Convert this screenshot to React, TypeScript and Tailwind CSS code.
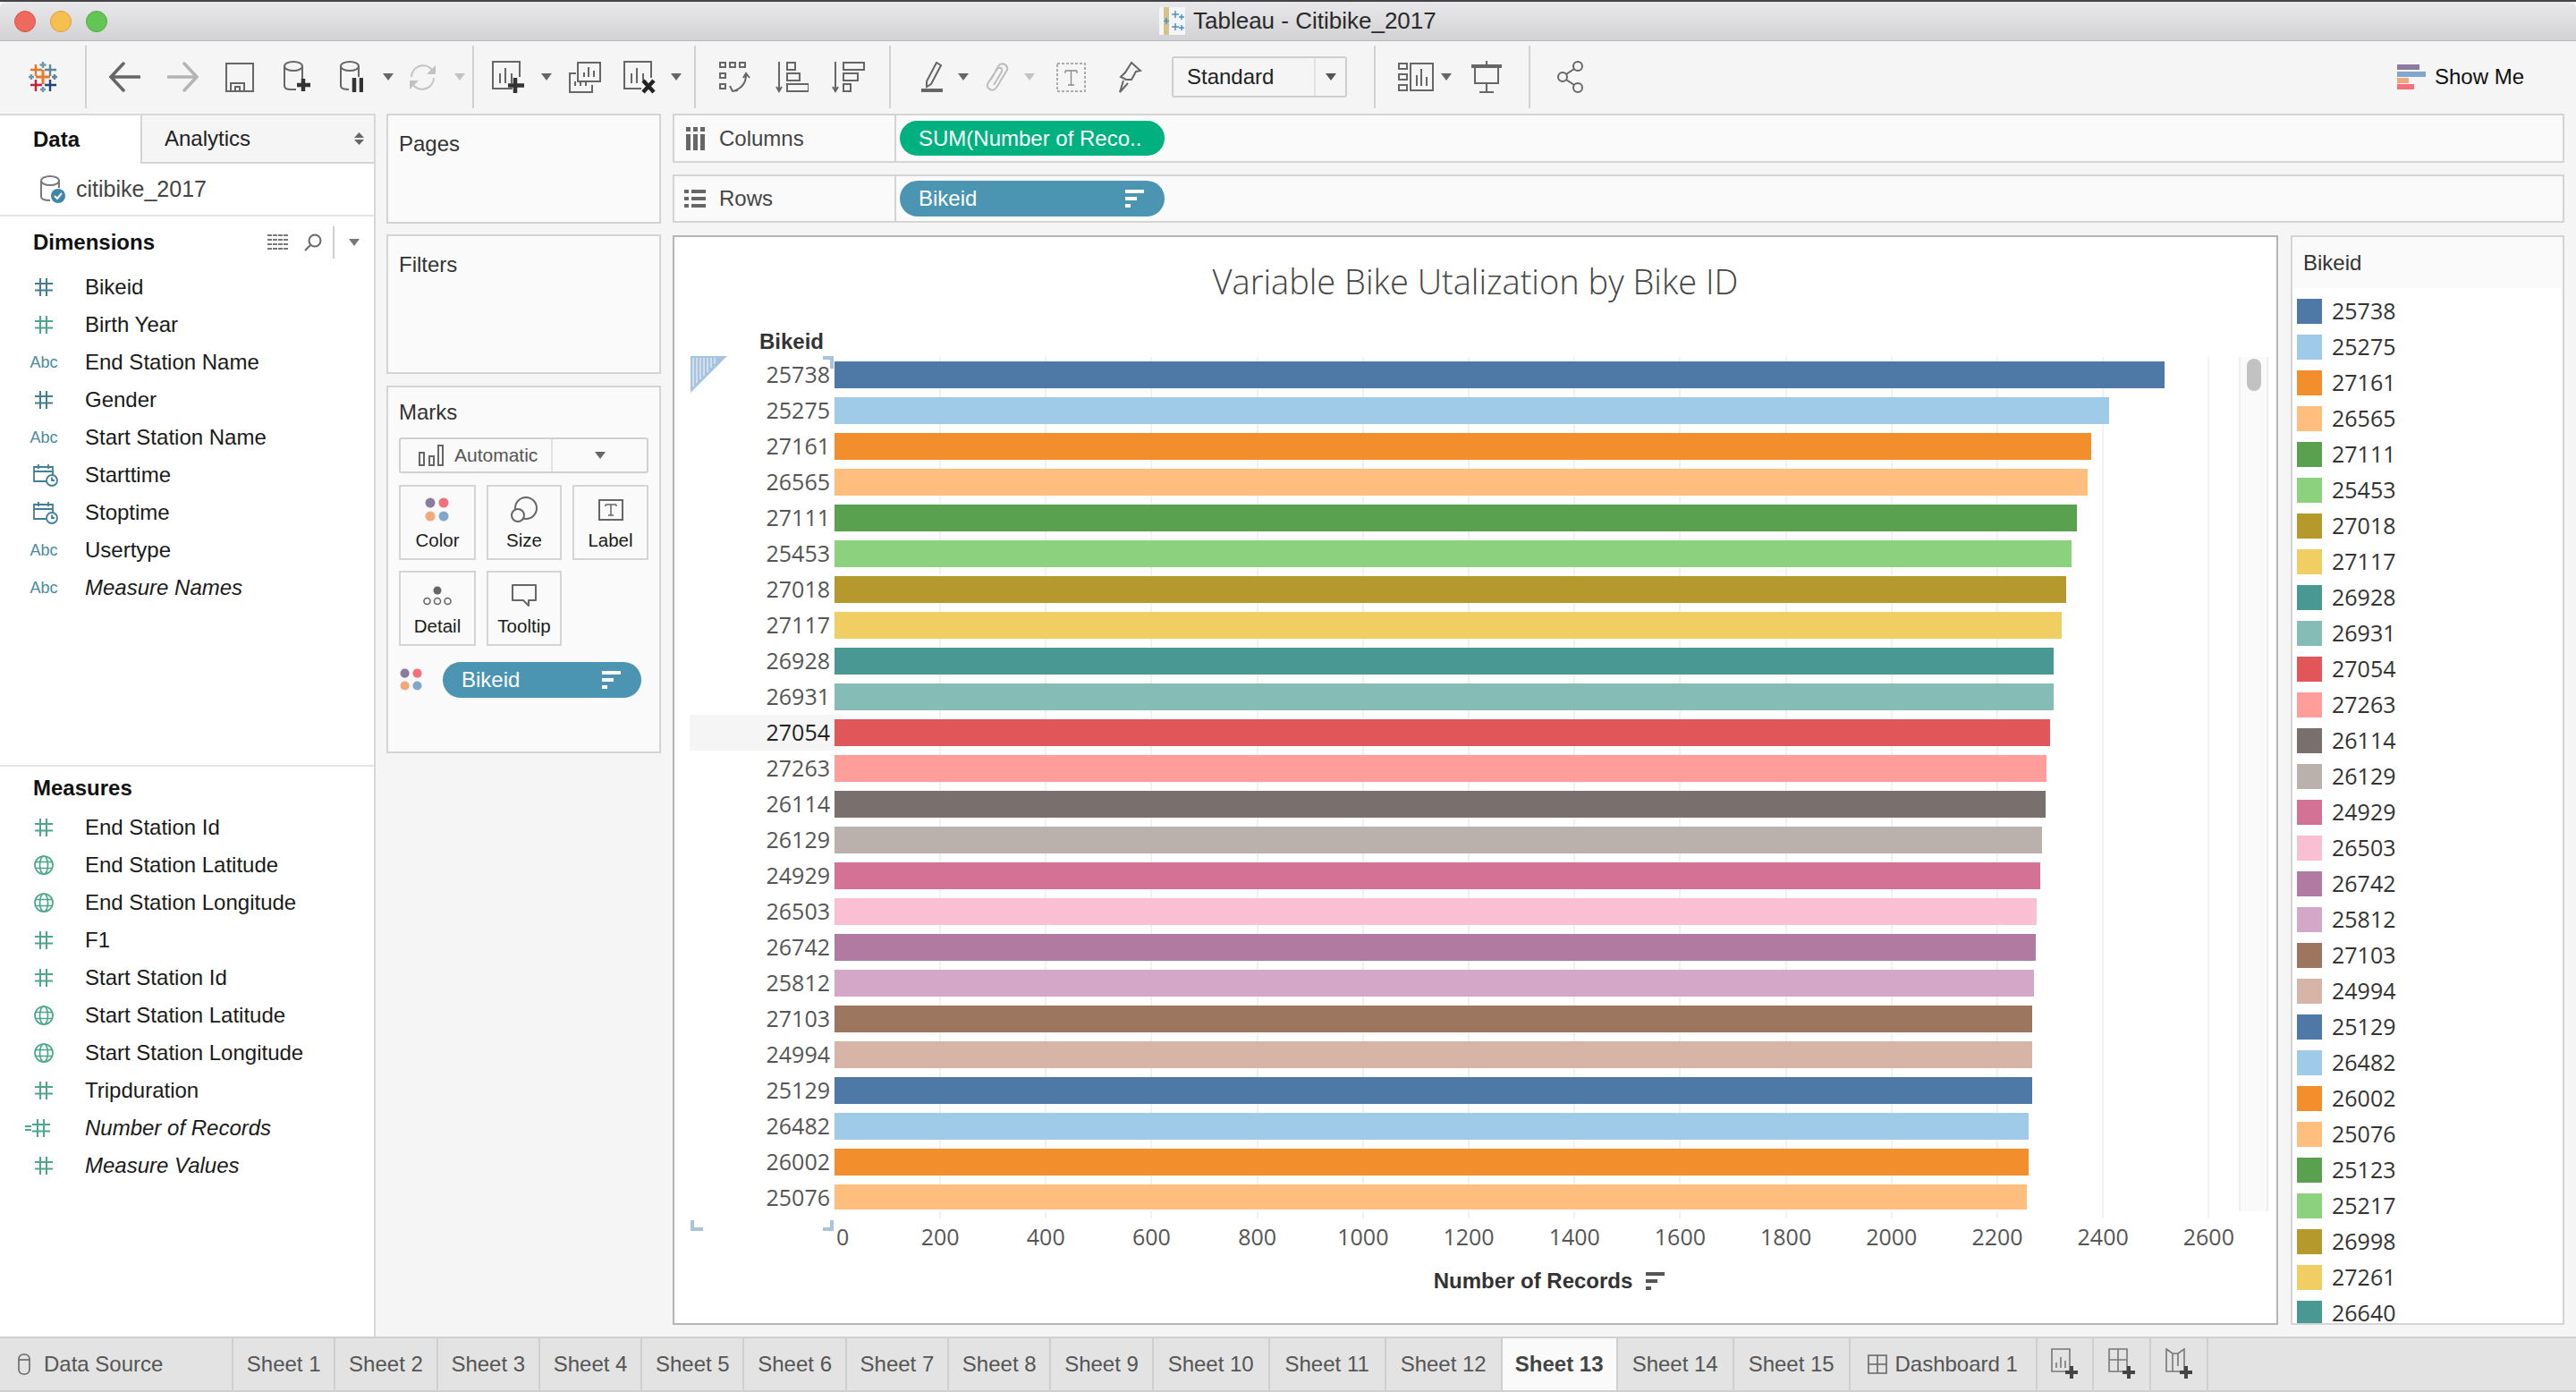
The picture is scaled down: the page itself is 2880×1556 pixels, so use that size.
import React from 'react';

const UI = "font-['Liberation_Sans',Arial,sans-serif]";
const NUM = "font-['Open_Sans',sans-serif]";

const rows: [string, string, number][] = [
  ['25738', '#4e79a7', 2420], ['25275', '#a0cbe8', 2358], ['27161', '#f28e2b', 2338], ['26565', '#ffbe7d', 2334],
  ['27111', '#59a14f', 2322], ['25453', '#8cd17d', 2316], ['27018', '#b6992d', 2310], ['27117', '#f1ce63', 2305],
  ['26928', '#499894', 2296], ['26931', '#86bcb6', 2296], ['27054', '#e15759', 2292], ['27263', '#ff9d9a', 2288],
  ['26114', '#79706e', 2287], ['26129', '#bab0ac', 2283], ['24929', '#d37295', 2281], ['26503', '#fabfd2', 2277],
  ['26742', '#b07aa1', 2276], ['25812', '#d4a6c8', 2274], ['27103', '#9d7660', 2272], ['24994', '#d7b5a6', 2272],
  ['25129', '#4e79a7', 2272], ['26482', '#a0cbe8', 2268], ['26002', '#f28e2b', 2268], ['25076', '#ffbe7d', 2266],
];

const legendExtra: [string, string][] = [
  ['25123', '#59a14f'], ['25217', '#8cd17d'], ['26998', '#b6992d'], ['27261', '#f1ce63'], ['26640', '#499894'],
];

const ticks = [200, 400, 600, 800, 1000, 1200, 1400, 1600, 1800, 2000, 2200, 2400, 2600];

const dimensions: [string, string, boolean?][] = [
  ['hash', 'Bikeid'], ['hashg', 'Birth Year'], ['abc', 'End Station Name'], ['hash', 'Gender'],
  ['abc', 'Start Station Name'], ['cal', 'Starttime'], ['cal', 'Stoptime'], ['abc', 'Usertype'],
  ['abc', 'Measure Names', true],
];

const measures: [string, string, boolean?][] = [
  ['hashg', 'End Station Id'], ['globe', 'End Station Latitude'], ['globe', 'End Station Longitude'], ['hashg', 'F1'],
  ['hashg', 'Start Station Id'], ['globe', 'Start Station Latitude'], ['globe', 'Start Station Longitude'],
  ['hashg', 'Tripduration'], ['calc', 'Number of Records', true], ['hashg', 'Measure Values', true],
];

const Caret = ({ color = '#666' }: { color?: string }) => (
  <svg width="12" height="8" viewBox="0 0 12 8"><path d="M0 0h12L6 8z" fill={color} /></svg>
);

const SortBars = ({ color = '#fff' }: { color?: string }) => (
  <svg width="21" height="20" viewBox="0 0 21 20" fill={color}>
    <rect x="0" y="0" width="21" height="4" />
    <rect x="0" y="8" width="13" height="4" />
    <rect x="0" y="16" width="6" height="4" />
  </svg>
);

const Hash = ({ color }: { color: string }) => (
  <svg width="20" height="20" viewBox="0 0 20 20" stroke={color} strokeWidth="2" fill="none">
    <path d="M6 0v20M13 0v20M0 6h20M0 13.500h20" />
  </svg>
);

const Globe = () => (
  <svg width="22" height="22" viewBox="0 0 22 22" stroke="#4aa888" strokeWidth="1.700" fill="none">
    <circle cx="11" cy="11" r="10" />
    <ellipse cx="11" cy="11" rx="4.500" ry="10" />
    <path d="M1.500 7.500h19M1.500 14.500h19" />
  </svg>
);

const Cal = () => (
  <svg width="28" height="26" viewBox="0 0 28 26" fill="none" stroke="#3f7f9a" strokeWidth="1.800">
    <path d="M15 20H1V4h21v9M1 9h21M6 1v5M17 1v5" />
    <circle cx="21" cy="19" r="6" fill="#fff" />
    <path d="M21 15.500V19h3" />
  </svg>
);

const FieldIcon = ({ kind }: { kind: string }) => {
  if (kind === 'hash') return <Hash color="#3f7f9a" />;
  if (kind === 'hashg') return <Hash color="#4aa888" />;
  if (kind === 'globe') return <Globe />;
  if (kind === 'cal') return <div className="ml-[3px]"><Cal /></div>;
  if (kind === 'abc') return <span className="text-[18px] text-[#4a8aa6]">Abc</span>;
  return (
    <div className="flex items-center gap-[1px] -ml-[15px]">
      <svg width="7" height="6" viewBox="0 0 7 6" fill="#4aa888"><rect width="7" height="2" /><rect y="4" width="7" height="2" /></svg>
      <Hash color="#4aa888" />
    </div>
  );
};

const Field = ({ icon, name, italic, h }: { icon: string; name: string; italic?: boolean; h: string }) => (
  <div className={`flex items-center ${h}`}>
    <div className="w-[95px] flex justify-center pl-[21px] pr-[18px] shrink-0">
      <FieldIcon kind={icon} />
    </div>
    <span className={`text-[24px] text-[#1a1a1a] ${italic ? 'italic' : ''}`}>{name}</span>
  </div>
);

const Logo = () => (
  <svg width="32" height="34" viewBox="0 0 32 34" strokeWidth="2.400" fill="none">
    <path d="M16 9v16M8 17h16" stroke="#e8762b" strokeWidth="3" />
    <path d="M8 3v13M2 9h13" stroke="#e8762b" />
    <path d="M24 3v13M18 9h13" stroke="#5b879b" />
    <path d="M8 20v13M2 26h13" stroke="#c72037" />
    <path d="M24 20v13M18 26h13" stroke="#1f447e" />
    <path d="M16 0v7M12.500 3.500h7" stroke="#7099a6" />
    <path d="M16 28v6M13 31h6" stroke="#7099a6" />
    <path d="M3 14v6M0 17h6" stroke="#7099a6" />
    <path d="M29 14v6M26 17h6" stroke="#59879b" />
  </svg>
);

const TbSep = ({ ml }: { ml: string }) => <div className={`w-[2px] h-[70px] bg-[#d2d2d2] shrink-0 ${ml}`} />;

const ColorDots = ({ size = 28 }: { size?: number }) => (
  <svg width={size} height={size} viewBox="0 0 28 28">
    <circle cx="6" cy="6" r="5.500" fill="#8b7ba0" />
    <circle cx="21" cy="6" r="5.500" fill="#f4707c" />
    <circle cx="6" cy="21" r="5.500" fill="#f2a87c" />
    <circle cx="21" cy="21" r="5.500" fill="#82a7cc" />
  </svg>
);

const MarkBtn = ({ label, icon, w }: { label: string; icon: React.ReactNode; w: string }) => (
  <div className={`${w} h-[84px] border-2 border-[#d4d4d4] flex flex-col items-center`}>
    <div className="h-[48px] flex items-center justify-center pt-[4px]">{icon}</div>
    <span className="text-[20.500px] text-[#1a1a1a] leading-[24px]">{label}</span>
  </div>
);

const Tab = ({ w, label, active }: { w: string; label: string; active?: boolean }) => (
  <div className={`${w} shrink-0 h-full flex items-center justify-center border-r-2 border-[#cfcfcf] text-[24px] ${active ? 'bg-[#fafafa] font-bold text-[#444]' : 'text-[#555]'}`}>
    {label}
  </div>
);

const AddIcon = ({ children }: { children: React.ReactNode }) => (
  <svg width="30" height="36" viewBox="0 0 30 36" fill="none" stroke="#777" strokeWidth="1.600">
    {children}
    <path d="M23 20v14M16 27h14" stroke="#444" strokeWidth="4" />
  </svg>
);

export default function App() {
  return (
    <div className={`${UI} w-[2880px] h-[1556px] overflow-hidden bg-[#f5f5f5] flex flex-col`}>
      <div className="h-[2px] bg-[#444] shrink-0" />

      {/* title bar */}
      <div className="h-[44px] shrink-0 relative flex items-center rounded-t-[8px] bg-gradient-to-b from-[#e9e8ea] to-[#d2d1d3] border-b border-[#b8b8b8]">
        <div className="flex items-center gap-[16px] ml-[16px]">
          <div className="w-[24px] h-[24px] rounded-full bg-[#ee6a5f] border border-[#d8524a]" />
          <div className="w-[24px] h-[24px] rounded-full bg-[#f6bf4f] border border-[#dca13a]" />
          <div className="w-[24px] h-[24px] rounded-full bg-[#62c554] border border-[#4fae43]" />
        </div>
        <div className="flex items-center gap-[9px] ml-[1176px]">
          <svg width="29" height="31" viewBox="0 0 29 31">
            <rect width="29" height="31" fill="#f3f5f7" />
            <rect x="5" width="6" height="31" fill="#d4c48c" />
            <path d="M18 4v8M14 8h8M25 8v6M22 11h6M18 18v8M14 22h8M8 12v7M5 15.500h6M25 20v6M22 23h6" stroke="#4f8fc0" strokeWidth="1.500" />
          </svg>
          <span className="text-[26px] text-[#2a2a2a]">Tableau - Citibike_2017</span>
        </div>
      </div>

      {/* toolbar */}
      <div className="h-[81px] shrink-0 flex items-center bg-[#f5f5f5] pb-[1px]">
        <div className="ml-[32px]"><Logo /></div>
        <TbSep ml="ml-[31px]" />
        <svg className="ml-[25px]" width="35" height="34" viewBox="0 0 35 34" fill="none" stroke="#666" strokeWidth="3.500" strokeLinecap="round">
          <path d="M34 17H3M16 2L2 17l14 15" />
        </svg>
        <svg className="ml-[30px]" width="35" height="34" viewBox="0 0 35 34" fill="none" stroke="#b4b4b4" strokeWidth="3.500" strokeLinecap="round">
          <path d="M1 17h31M19 2l14 15-14 15" />
        </svg>
        <svg className="ml-[30px]" width="32" height="33" viewBox="0 0 32 33" fill="none" stroke="#666" strokeWidth="2">
          <path d="M1 1h30v31H1zM6 32V23h15v9M11 32v-5h5v5" />
        </svg>
        <svg className="ml-[33px]" width="30" height="36" viewBox="0 0 30 36" fill="none" stroke="#666" strokeWidth="2">
          <ellipse cx="11" cy="6" rx="10" ry="5" />
          <path d="M1 6v22q0 4 7 4h6M21 6v14" />
          <path d="M22 20v14M15 27h15" stroke="#333" strokeWidth="4.500" />
        </svg>
        <svg className="ml-[33px]" width="26" height="36" viewBox="0 0 26 36" fill="none" stroke="#666" strokeWidth="2">
          <ellipse cx="11" cy="6" rx="10" ry="5" />
          <path d="M1 6v22q0 4 9 4M21 6v12" />
          <path d="M16 19v16M24 19v16" stroke="#333" strokeWidth="4.500" />
        </svg>
        <div className="ml-[22px]"><Caret color="#666" /></div>
        <svg className="ml-[16px]" width="33" height="33" viewBox="0 0 33 33" fill="none" stroke="#c2c2c2" strokeWidth="2">
          <path d="M4 16A13 13 0 0 1 27 8M29 17A13 13 0 0 1 6 25" />
          <path d="M31 3v10H21z" fill="#c2c2c2" stroke="none" />
          <path d="M2 30V20h10z" fill="#c2c2c2" stroke="none" />
        </svg>
        <div className="ml-[19px]"><Caret color="#c2c2c2" /></div>
        <TbSep ml="ml-[8px]" />
        <svg className="ml-[20px]" width="37" height="37" viewBox="0 0 37 37" fill="none" stroke="#666" strokeWidth="2">
          <path d="M23 31H1V1h30v17M9 25V14M15 25V8M22 25V14" />
          <path d="M26 19v17M18 27.500h18" stroke="#333" strokeWidth="4.500" />
        </svg>
        <div className="ml-[18px]"><Caret color="#666" /></div>
        <svg className="ml-[19px]" width="36" height="35" viewBox="0 0 36 35" fill="none" stroke="#666" strokeWidth="2">
          <path d="M10 1h25v21H10zM17 17v-5M22 17V6M28 17V10" />
          <path d="M8 13H1v21h25v-8M7 27v-5M13 27v-5M19 27v-5" />
        </svg>
        <svg className="ml-[25px]" width="36" height="37" viewBox="0 0 36 37" fill="none" stroke="#666" strokeWidth="2">
          <path d="M20 31H1V1h30v18M9 25V14M15 25V8M22 22V14" />
          <path d="M22 22l12 13M34 22L22 35" stroke="#222" strokeWidth="4.500" />
        </svg>
        <div className="ml-[17px]"><Caret color="#666" /></div>
        <TbSep ml="ml-[14px]" />
        <svg className="ml-[25px]" width="37" height="37" viewBox="0 0 37 37" fill="none" stroke="#666" strokeWidth="2">
          <path d="M2 2h6v5H2zM13 2h6v5h-6zM24 2h6v5h-6zM2 14h6v5H2zM2 26h6v5H2zM31 16q0 13-14 18M28 19l3-5 4 5M13 28l3 6 6-1" />
        </svg>
        <svg className="ml-[27px]" width="37" height="37" viewBox="0 0 37 37" fill="none" stroke="#666" strokeWidth="2">
          <path d="M4 1v33M1 29l3 5 3-5M13 2h9v8h-9zM13 14h14v8H13zM13 26h24v8H13z" />
        </svg>
        <svg className="ml-[26px]" width="37" height="37" viewBox="0 0 37 37" fill="none" stroke="#666" strokeWidth="2">
          <path d="M4 1v33M1 29l3 5 3-5M13 2h23v8H13zM13 14h16v8H13zM13 26h8v8h-8z" />
        </svg>
        <TbSep ml="ml-[27px]" />
        <svg className="ml-[34px]" width="24" height="34" viewBox="0 0 24 34" fill="none" stroke="#666" strokeWidth="2">
          <path d="M6 22L17 1l5 3-11 21-5 3z" />
          <rect x="0" y="30" width="24" height="4" fill="#666" stroke="none" />
        </svg>
        <div className="ml-[17px]"><Caret color="#666" /></div>
        <svg className="ml-[19px]" width="27" height="34" viewBox="0 0 27 34" fill="none" stroke="#bdbdbd" strokeWidth="2">
          <path d="M6 20L14 5q3-4 7-2t3 6L12 29q-3 4-7 2t-3-6L13 8q2-2 4-1t1 4L9 26" />
        </svg>
        <div className="ml-[16px]"><Caret color="#c2c2c2" /></div>
        <svg className="ml-[24px]" width="33" height="33" viewBox="0 0 33 33" fill="none">
          <rect x="1" y="1" width="31" height="31" stroke="#aaa" strokeWidth="2" strokeDasharray="3 2" />
          <path d="M10 9h13M16.500 9v16M13 25h7M10 9v3M23 9v3" stroke="#888" strokeWidth="1.300" />
        </svg>
        <svg className="ml-[35px]" width="28" height="36" viewBox="0 0 28 36" fill="none" stroke="#666" strokeWidth="2">
          <path d="M16 2l10 9-5 1-5 9-6 0-6-3 5-5zM7 22L3 35l9-10" />
        </svg>
        <div className={`ml-[33px] w-[196px] h-[46px] border-2 border-[#cfcfcf] rounded-[3px] flex items-center`}>
          <span className="text-[24px] text-[#222] pl-[15px] w-[157px]">Standard</span>
          <div className="w-[2px] h-full bg-[#e2e2e2]" />
          <div className="flex-1 flex justify-center"><Caret color="#555" /></div>
        </div>
        <TbSep ml="ml-[30px]" />
        <svg className="ml-[25px]" width="40" height="34" viewBox="0 0 40 34" fill="none" stroke="#666" strokeWidth="2">
          <path d="M1 2h9v6H1zM1 14h9v6H1zM1 26h9v6H1zM14 2h25v30H14zM21 27V15M26 27V8M32 27V17" />
        </svg>
        <div className="ml-[8px]"><Caret color="#666" /></div>
        <svg className="ml-[22px]" width="34" height="36" viewBox="0 0 34 36" fill="none" stroke="#666" strokeWidth="2">
          <path d="M17 0v4M4 8v17h26V8M17 25v10M9 35h16" />
          <rect x="0" y="4" width="34" height="4" fill="#666" stroke="none" />
        </svg>
        <TbSep ml="ml-[30px]" />
        <svg className="ml-[30px]" width="30" height="36" viewBox="0 0 30 36" fill="none" stroke="#666" strokeWidth="2">
          <circle cx="6" cy="18" r="5" />
          <circle cx="23" cy="6" r="5" />
          <circle cx="23" cy="30" r="5" />
          <path d="M10 15l9-6M10 21l9 6" />
        </svg>
        <div className="ml-auto flex items-center mr-[58px]">
          <svg width="32" height="28" viewBox="0 0 32 28">
            <rect x="0" y="0" width="25" height="6" fill="#8b7ba0" />
            <rect x="0" y="8" width="32" height="6" fill="#82a7cc" />
            <rect x="0" y="15" width="13" height="6" fill="#f2a87c" />
            <rect x="0" y="22" width="19" height="6" fill="#f4707c" />
          </svg>
          <span className="ml-[10px] text-[24px] text-[#111]">Show Me</span>
        </div>
      </div>

      {/* main */}
      <div className="h-[1367px] shrink-0 flex">
        {/* data pane */}
        <div className="w-[420px] shrink-0 bg-white border-r-2 border-[#d8d8d8] flex flex-col border-t-2 border-t-[#d8d8d8]">
          <div className="h-[54px] shrink-0 flex">
            <div className="w-[157px] flex items-center pl-[37px] text-[24px] font-bold text-[#111]">Data</div>
            <div className="flex-1 flex items-center justify-between pl-[25px] pr-[11px] text-[24px] text-[#222] bg-[#f5f5f5] border-l-2 border-b-2 border-[#d4d4d4]">
              <span>Analytics</span>
              <svg width="11" height="14" viewBox="0 0 11 14" fill="#666"><path d="M5.500 0L11 6H0zM5.500 14L0 8h11z" /></svg>
            </div>
          </div>
          <div className="h-[59px] shrink-0 flex items-center pl-[45px] border-b-2 border-[#e4e4e4]">
            <svg width="28" height="31" viewBox="0 0 28 31" fill="none">
              <ellipse cx="11" cy="6" rx="10" ry="5" stroke="#777" strokeWidth="2" />
              <path d="M1 6v18q0 4 10 4M21 6v8" stroke="#777" strokeWidth="2" />
              <circle cx="20" cy="23" r="8" fill="#3f87a8" />
              <path d="M16 23l3 3 5-6" stroke="#fff" strokeWidth="2" />
            </svg>
            <span className="ml-[12px] text-[25px] text-[#444]">citibike_2017</span>
          </div>
          <div className="h-[58px] shrink-0 flex items-center pl-[37px]">
            <span className="text-[24px] font-bold text-[#111]">Dimensions</span>
            <svg className="ml-[126px]" width="24" height="18" viewBox="0 0 24 18" stroke="#777" strokeWidth="2" strokeDasharray="5 1">
              <path d="M0 1h24M0 6h24M0 11h24M0 16h24" />
            </svg>
            <svg className="ml-[17px]" width="20" height="20" viewBox="0 0 20 20" fill="none" stroke="#666" strokeWidth="2">
              <circle cx="12" cy="8" r="6.500" />
              <path d="M7 13l-6 6" />
            </svg>
            <div className="w-[2px] h-[36px] bg-[#cfcfcf] ml-[12px]" />
            <div className="ml-[16px]"><Caret color="#777" /></div>
          </div>
          {dimensions.map(([icon, name, italic]) => (
            <Field key={name} icon={icon} name={name} italic={italic} h="h-[42px]" />
          ))}
          <div className="mt-[177px] border-t-2 border-[#e4e4e4] h-[47px] flex items-center pl-[37px] pt-[2px] shrink-0">
            <span className="text-[24px] font-bold text-[#111]">Measures</span>
          </div>
          <div className="h-[2px] shrink-0" />
          {measures.map(([icon, name, italic]) => (
            <Field key={name} icon={icon} name={name} italic={italic} h="h-[42px]" />
          ))}
        </div>

        {/* cards */}
        <div className="w-[307px] ml-[12px] shrink-0 flex flex-col">
          <div className="h-[123px] border-2 border-[#d4d4d4] bg-[#fafafa] pl-[12px] pt-[14px] text-[24px] text-[#333]">Pages</div>
          <div className="h-[156px] mt-[12px] border-2 border-[#d4d4d4] bg-[#fafafa] pl-[12px] pt-[14px] text-[24px] text-[#333]">Filters</div>
          <div className="h-[411px] mt-[13px] border-2 border-[#d4d4d4] bg-[#fafafa] pl-[12px] pr-[12px] pt-[14px]">
            <div className="text-[24px] text-[#333] leading-[28px]">Marks</div>
            <div className="mt-[14px] h-[40px] border-2 border-[#d0d0d0] rounded-[3px] flex items-center">
              <svg className="ml-[20px]" width="28" height="24" viewBox="0 0 28 24" fill="none" stroke="#666" strokeWidth="2">
                <path d="M1 9h5v14H1zM12 13h5v10h-5zM22 1h5v22h-5z" />
              </svg>
              <span className="ml-[12px] text-[21px] text-[#555] w-[108px]">Automatic</span>
              <div className="w-[2px] h-full bg-[#e2e2e2]" />
              <div className="flex-1 flex justify-center"><Caret color="#666" /></div>
            </div>
            <div className="mt-[13px] flex gap-[12px]">
              <MarkBtn label="Color" w="w-[86px]" icon={<ColorDots />} />
              <MarkBtn label="Size" w="w-[84px]" icon={
                <svg width="30" height="30" viewBox="0 0 30 30" fill="none" stroke="#666" strokeWidth="2">
                  <circle cx="17" cy="13" r="12" />
                  <circle cx="8" cy="21" r="7" fill="#fafafa" />
                </svg>
              } />
              <MarkBtn label="Label" w="w-[85px]" icon={
                <svg width="28" height="24" viewBox="0 0 28 24" fill="none" stroke="#666" strokeWidth="2">
                  <rect x="1" y="1" width="26" height="22" />
                  <path d="M8 6h12M14 6v12M11 18h6M8 6v2M20 6v2" strokeWidth="1.500" />
                </svg>
              } />
            </div>
            <div className="mt-[12px] flex gap-[12px]">
              <MarkBtn label="Detail" w="w-[86px]" icon={
                <svg width="32" height="22" viewBox="0 0 32 22" fill="none" stroke="#666" strokeWidth="1.600">
                  <circle cx="16" cy="5" r="4.500" fill="#666" stroke="none" />
                  <circle cx="4.500" cy="17" r="3.500" />
                  <circle cx="16" cy="17" r="3.500" />
                  <circle cx="27.500" cy="17" r="3.500" />
                </svg>
              } />
              <MarkBtn label="Tooltip" w="w-[84px]" icon={
                <svg width="28" height="26" viewBox="0 0 28 26" fill="none" stroke="#666" strokeWidth="2">
                  <path d="M1 1h26v17h-8v6l-6-6H1z" strokeLinejoin="round" />
                </svg>
              } />
            </div>
            <div className="mt-[18px] flex items-center">
              <div className="ml-[1px] w-[36px]"><ColorDots size={26} /></div>
              <div className="ml-[12px] w-[222px] h-[40px] rounded-full bg-[#4b95b3] flex items-center justify-between pl-[21px] pr-[23px] text-[24px] text-white">
                <span>Bikeid</span>
                <SortBars />
              </div>
            </div>
          </div>
        </div>

        {/* workspace */}
        <div className="w-[2115px] ml-[13px] shrink-0 flex flex-col">
          <div className="h-[55px] shrink-0 border-2 border-[#d4d4d4] bg-[#fafafa] flex items-center">
            <div className="w-[248px] h-full shrink-0 border-r-2 border-[#d4d4d4] flex items-center pl-[13px]">
              <svg width="22" height="26" viewBox="0 0 22 26" fill="#666">
                <rect x="0" y="0" width="5" height="5" /><rect x="8" y="0" width="5" height="5" /><rect x="16" y="0" width="5" height="5" />
                <rect x="0" y="8" width="5" height="18" /><rect x="8" y="8" width="5" height="18" /><rect x="16" y="8" width="5" height="18" />
              </svg>
              <span className="ml-[15px] text-[24px] text-[#444]">Columns</span>
            </div>
            <div className="ml-[4px] w-[296px] h-[39px] rounded-full bg-[#00b180] flex items-center pl-[21px] text-[24px] text-white whitespace-nowrap">
              SUM(Number of Reco..
            </div>
          </div>
          <div className="h-[54px] mt-[13px] shrink-0 border-2 border-[#d4d4d4] bg-[#fafafa] flex items-center">
            <div className="w-[248px] h-full shrink-0 border-r-2 border-[#d4d4d4] flex items-center pl-[11px]">
              <svg width="24" height="20" viewBox="0 0 24 20" fill="#666">
                <rect x="0" y="0" width="5" height="4" /><rect x="8" y="0" width="16" height="4" />
                <rect x="0" y="8" width="5" height="4" /><rect x="8" y="8" width="16" height="4" />
                <rect x="0" y="16" width="5" height="4" /><rect x="8" y="16" width="16" height="4" />
              </svg>
              <span className="ml-[15px] text-[24px] text-[#444]">Rows</span>
            </div>
            <div className="ml-[4px] w-[296px] h-[40px] rounded-full bg-[#4b95b3] flex items-center justify-between pl-[21px] pr-[23px] text-[24px] text-white">
              <span>Bikeid</span>
              <SortBars />
            </div>
          </div>
          <div className="h-[1218px] mt-[14px] shrink-0 flex">
            {/* chart */}
            <div className="w-[1795px] h-full shrink-0 border-2 border-[#b4b4b4] bg-white flex flex-col relative">
              <div className={`${NUM} h-[100px] pt-[22px] text-center text-[38px] leading-[54px] font-light text-[#444] shrink-0 pl-[0px]`}>
                Variable Bike Utalization by Bike ID
              </div>
              <div className="h-[34px] shrink-0 w-[167px] text-right text-[24px] leading-[34px] font-bold text-[#333]">Bikeid</div>

              <div className="absolute left-[18px] top-[133px]">
                <svg width="41" height="41" viewBox="0 0 41 41">
                  <path d="M0 0h41L0 41z" fill="#a8c4dd" />
                  <path d="M3 2v32M7 2v28M11 2v24M15 2v20M19 2v16M23 2v11M27 2v7" stroke="#dce8f2" strokeWidth="1.500" />
                </svg>
              </div>
              <div className="absolute left-[166px] top-[133px] w-[12px] h-[14px] border-t-4 border-r-4 border-[#a8c4dd]" />
              <div className="absolute left-[18px] top-[1099px] w-[14px] h-[12px] border-b-4 border-l-4 border-[#a8c4dd]" />
              <div className="absolute left-[166px] top-[1099px] w-[12px] h-[12px] border-b-4 border-r-4 border-[#a8c4dd]" />

              <div className="flex h-[963px] shrink-0">
                <div className="w-[179px] shrink-0 pl-[17px]">
                  {rows.map(([id], i) => (
                    <div key={id} className={`h-[40px] flex items-center justify-end pr-[12px] mr-[-7px] ${NUM} text-[25px] ${i === 10 ? 'bg-[#f5f5f5] text-[#222]' : 'text-[#555]'}`}>
                      {id}
                    </div>
                  ))}
                </div>
                <div className="w-[1570px] shrink-0 relative">
                  {ticks.map((t, i) => (
                    <div key={t} className="absolute top-0 bottom-0 w-[2px] bg-[#f1f1f1]" style={{ left: 117 + i * 118.2 }} />
                  ))}
                  {rows.map(([id, color, end], i) => (
                    <div key={id} className="h-[40px] flex items-center relative">
                      <div className={i === 23 ? 'h-[30px] border-b-2 border-white' : 'h-[30px]'} style={{ width: end - 933, backgroundColor: color }} />
                    </div>
                  ))}
                </div>
                <div className="w-[33px] shrink-0 h-[955px] bg-[#fafafa] border-l-2 border-r-2 border-[#eeeeee] pt-[2px] pl-[7px]">
                  <div className="w-[16px] h-[36px] rounded-full bg-[#c2c2c2]" />
                </div>
              </div>

              <div className="flex shrink-0 pl-[179px] h-[44px] items-center mt-[-1px]">
                <div className={`${NUM} w-[59px] pl-[2px] text-[25px] text-[#555] shrink-0`}>0</div>
                {ticks.map((t) => (
                  <div key={t} className={`${NUM} w-[118.200px] shrink-0 text-center text-[25px] text-[#555]`}>{t}</div>
                ))}
              </div>
              <div className="flex items-center justify-center mt-[9px] pl-[165px] pr-[0px]">
                <span className="text-[24px] font-bold text-[#333]">Number of Records</span>
                <div className="ml-[15px]"><SortBars color="#555" /></div>
              </div>
            </div>

            {/* legend */}
            <div className="w-[306px] ml-[14px] h-full shrink-0 border-2 border-[#d4d4d4] bg-white flex flex-col overflow-hidden">
              <div className="h-[57px] shrink-0 bg-[#fafafa] flex items-center pl-[12px] text-[24px] text-[#333]">Bikeid</div>
              <div className="pl-[5px] pt-[6px]">
                {[...rows.map(([id, c]) => [id, c] as [string, string]), ...legendExtra].map(([id, c]) => (
                  <div key={id} className="h-[40px] flex items-center">
                    <div className="w-[28px] h-[28px]" style={{ backgroundColor: c }} />
                    <span className={`${NUM} ml-[11px] text-[25px] text-[#333]`}>{id}</span>
                  </div>
                ))}
              </div>
            </div>
          </div>
        </div>
      </div>

      {/* tabs */}
      <div className="h-[62px] shrink-0 border-t-2 border-[#cfcfcf] border-b-2 border-b-[#cfcfcf] bg-[#e3e3e3] flex items-stretch">
        <div className="w-[261px] shrink-0 border-r-2 border-[#cfcfcf] flex items-center pl-[20px] text-[24px] text-[#555]">
          <svg width="14" height="24" viewBox="0 0 14 24" fill="none" stroke="#666" strokeWidth="1.600">
            <rect x="1" y="1" width="12" height="22" rx="5" />
            <path d="M1 7h12" />
          </svg>
          <span className="ml-[15px]">Data Source</span>
        </div>
        {['Sheet 1', 'Sheet 2', 'Sheet 3', 'Sheet 4', 'Sheet 5', 'Sheet 6', 'Sheet 7', 'Sheet 8', 'Sheet 9'].map((s) => (
          <Tab key={s} w="w-[114.300px]" label={s} />
        ))}
        <Tab w="w-[130px]" label="Sheet 10" />
        <Tab w="w-[130px]" label="Sheet 11" />
        <Tab w="w-[130px]" label="Sheet 12" />
        <Tab w="w-[129px]" label="Sheet 13" active />
        <Tab w="w-[130px]" label="Sheet 14" />
        <Tab w="w-[130px]" label="Sheet 15" />
        <div className="w-[209px] shrink-0 border-r-2 border-[#cfcfcf] flex items-center justify-center text-[24px] text-[#555]">
          <svg width="22" height="22" viewBox="0 0 22 22" fill="none" stroke="#666" strokeWidth="1.600">
            <path d="M1 1h20v20H1zM11 1v20M1 11h20" />
          </svg>
          <span className="ml-[8px]">Dashboard 1</span>
        </div>
        <div className="w-[63px] shrink-0 border-r-2 border-[#cfcfcf] flex items-center justify-center">
          <AddIcon><path d="M1 1h20v25H1zM6 22v-6M11 22V10M16 22v-8" /></AddIcon>
        </div>
        <div className="w-[64px] shrink-0 border-r-2 border-[#cfcfcf] flex items-center justify-center">
          <AddIcon><path d="M1 1h20v25H1zM11 1v25M1 13h20" /></AddIcon>
        </div>
        <div className="w-[64px] shrink-0 border-r-2 border-[#cfcfcf] flex items-center justify-center">
          <AddIcon><path d="M1 1l7 5h6l7-5v25H1zM8 6v20M14 6v14" /></AddIcon>
        </div>
      </div>
    </div>
  );
}
